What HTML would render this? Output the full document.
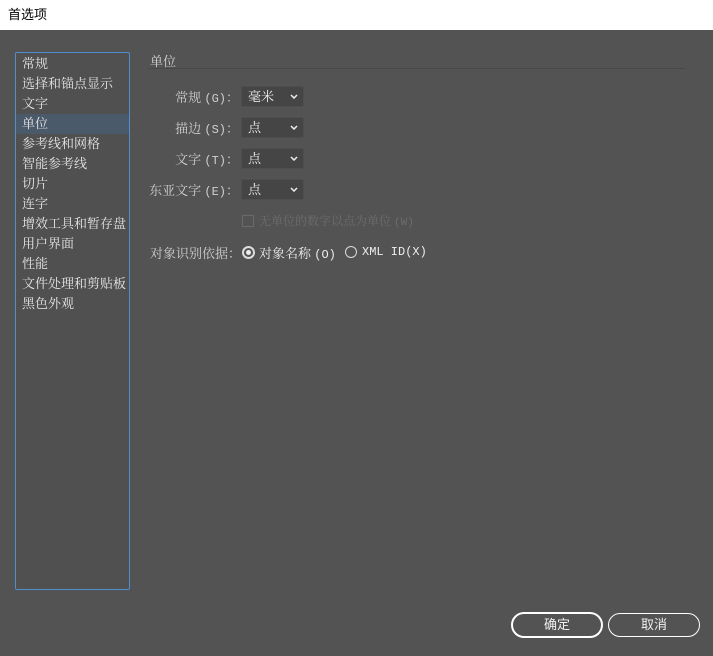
<!DOCTYPE html>
<html><head><meta charset="utf-8"><style>
body{margin:0;width:713px;height:656px;background:#535353;font-family:"Liberation Serif","Noto Serif CJK SC",serif;font-size:13px;color:#e6e6e6;position:relative;overflow:hidden}
.title{position:absolute;left:0;top:0;width:713px;height:30px;background:#fff;color:#000;font-family:"Liberation Sans","Noto Sans CJK SC",sans-serif;font-size:13px;line-height:29px;text-indent:8px}
.side{position:absolute;left:15px;top:52px;width:113px;height:536px;border:1px solid #4f8ed0;border-radius:2px;background:#505050}
.side div{height:20px;line-height:20px;padding-left:6px;white-space:nowrap}
.side .sel{background:#4b5a6b}
.abs{position:absolute;white-space:nowrap}
.hr{position:absolute;left:148px;top:68px;width:537px;height:1px;background:#484848}
.lab{position:absolute;right:474px;color:#cfcfcf}
.m{font-family:"Liberation Mono",monospace;font-size:12px}
.dd{position:absolute;left:241px;width:61px;height:19px;background:#454545;border:1px solid #4e4e4e;border-radius:2px;color:#f0f0f0;line-height:19px;text-indent:6px}
.dd svg{position:absolute;right:5px;top:7px}
.btn{position:absolute;top:612px;width:88px;height:22px;border:2px solid #fff;border-radius:13px;text-align:center;line-height:22px;color:#f0f0f0;font-family:"Liberation Sans","Noto Sans CJK SC",sans-serif}
</style></head><body>
<div class="title">首选项</div>
<div class="side">
<div style="height:1px"></div>
<div>常规</div><div>选择和锚点显示</div><div>文字</div><div class="sel">单位</div><div>参考线和网格</div><div>智能参考线</div><div>切片</div><div>连字</div><div>增效工具和暂存盘</div><div>用户界面</div><div>性能</div><div>文件处理和剪贴板</div><div>黑色外观</div>
</div>
<div class="abs" style="left:150px;top:51px;color:#d6d6d6">单位</div>
<div class="hr"></div>
<div class="lab" style="top:87px">常规 <span class="m">(G)</span>：</div>
<div class="lab" style="top:118px">描边 <span class="m">(S)</span>：</div>
<div class="lab" style="top:149px">文字 <span class="m">(T)</span>：</div>
<div class="lab" style="top:180px">东亚文字 <span class="m">(E)</span>：</div>
<div class="dd" style="top:86px">毫米<svg width="8" height="5"><path d="M1 1L4 4L7 1" stroke="#eee" stroke-width="1.5" fill="none"/></svg></div>
<div class="dd" style="top:117px">点<svg width="8" height="5"><path d="M1 1L4 4L7 1" stroke="#eee" stroke-width="1.5" fill="none"/></svg></div>
<div class="dd" style="top:148px">点<svg width="8" height="5"><path d="M1 1L4 4L7 1" stroke="#eee" stroke-width="1.5" fill="none"/></svg></div>
<div class="dd" style="top:179px">点<svg width="8" height="5"><path d="M1 1L4 4L7 1" stroke="#eee" stroke-width="1.5" fill="none"/></svg></div>
<div class="abs" style="left:242px;top:215px;width:10px;height:10px;border:1px solid #6a6a6a"></div>
<div class="abs" style="left:259px;top:212px;color:#6d6d6d;font-size:12px">无单位的数字以点为单位 <span class="m" style="font-size:11px">(W)</span></div>
<div class="abs" style="left:150px;top:243px;color:#cfcfcf">对象识别依据：</div>
<div class="abs" style="left:242px;top:246px;width:9px;height:9px;border-radius:50%;border:2px solid #ddd;background:#535353"><div style="margin:2px;width:5px;height:5px;border-radius:50%;background:#eee"></div></div>
<div class="abs" style="left:259px;top:243px;color:#eee">对象名称 <span class="m">(O)</span></div>
<div class="abs" style="left:345px;top:246px;width:10px;height:10px;border-radius:50%;border:1.5px solid #ddd"></div>
<div class="abs m" style="left:362px;top:245px;color:#eee">XML ID(X)</div>
<div class="btn" style="left:511px">确定</div>
<div class="btn" style="left:608px;border-width:1px;top:613px;width:90px">取消</div>
</body></html>
